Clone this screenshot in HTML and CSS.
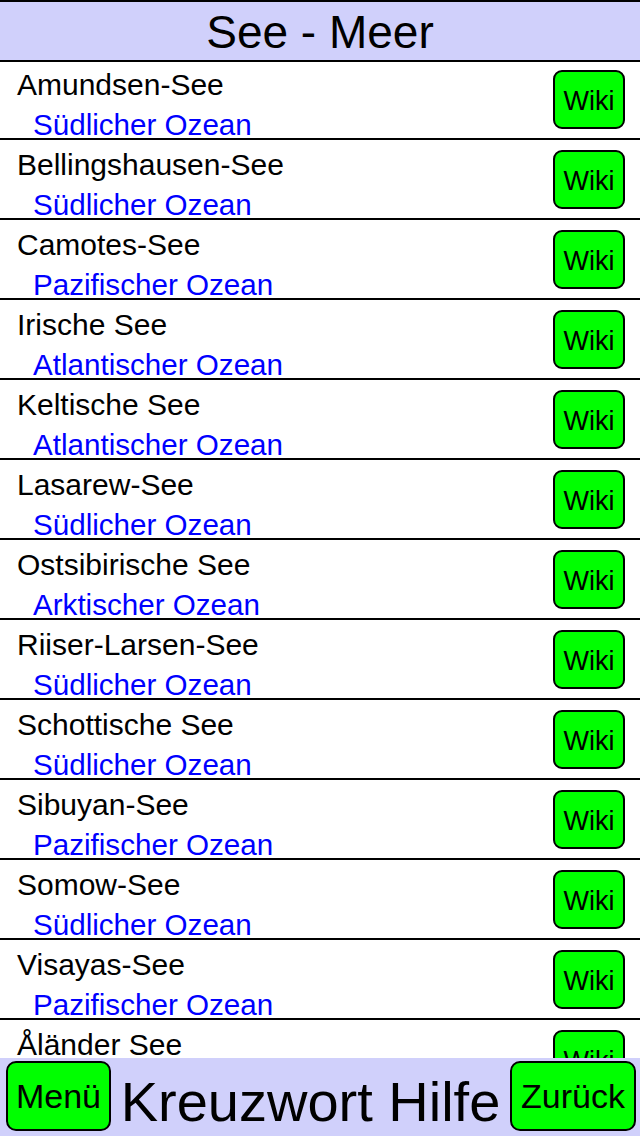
FILE: index.html
```html
<!DOCTYPE html>
<html lang="de">
<head>
<meta charset="utf-8">
<title>See - Meer</title>
<link rel="stylesheet" href="styles.css">
</head>
<body>
<div class="app">
  <header class="topbar">
    <h1 class="title">See - Meer</h1>
  </header>
  <main class="list">
    <div class="list-inner">
      <div class="row"><div class="text"><div class="name">Amundsen-See</div><div class="ocean">Südlicher Ozean</div></div><button class="wiki">Wiki</button></div>
      <div class="row"><div class="text"><div class="name">Bellingshausen-See</div><div class="ocean">Südlicher Ozean</div></div><button class="wiki">Wiki</button></div>
      <div class="row"><div class="text"><div class="name">Camotes-See</div><div class="ocean">Pazifischer Ozean</div></div><button class="wiki">Wiki</button></div>
      <div class="row"><div class="text"><div class="name">Irische See</div><div class="ocean">Atlantischer Ozean</div></div><button class="wiki">Wiki</button></div>
      <div class="row"><div class="text"><div class="name">Keltische See</div><div class="ocean">Atlantischer Ozean</div></div><button class="wiki">Wiki</button></div>
      <div class="row"><div class="text"><div class="name">Lasarew-See</div><div class="ocean">Südlicher Ozean</div></div><button class="wiki">Wiki</button></div>
      <div class="row"><div class="text"><div class="name">Ostsibirische See</div><div class="ocean">Arktischer Ozean</div></div><button class="wiki">Wiki</button></div>
      <div class="row"><div class="text"><div class="name">Riiser-Larsen-See</div><div class="ocean">Südlicher Ozean</div></div><button class="wiki">Wiki</button></div>
      <div class="row"><div class="text"><div class="name">Schottische See</div><div class="ocean">Südlicher Ozean</div></div><button class="wiki">Wiki</button></div>
      <div class="row"><div class="text"><div class="name">Sibuyan-See</div><div class="ocean">Pazifischer Ozean</div></div><button class="wiki">Wiki</button></div>
      <div class="row"><div class="text"><div class="name">Somow-See</div><div class="ocean">Südlicher Ozean</div></div><button class="wiki">Wiki</button></div>
      <div class="row"><div class="text"><div class="name">Visayas-See</div><div class="ocean">Pazifischer Ozean</div></div><button class="wiki">Wiki</button></div>
      <div class="row"><div class="text"><div class="name">Åländer See</div></div><button class="wiki">Wiki</button></div>
    </div>
  </main>
  <footer class="bottombar">
    <button class="navbtn menu">Menü</button>
    <div class="apptitle">Kreuzwort Hilfe</div>
    <button class="navbtn back">Zurück</button>
  </footer>
</div>
</body>
</html>
```
FILE: styles.css
```css
html, body {
  margin: 0;
  padding: 0;
  background: #ffffff;
}

body {
  font-family: "Liberation Sans", Arial, Helvetica, sans-serif;
  color: #000000;
}

.app {
  width: 640px;
  height: 1136px;
  display: flex;
  flex-direction: column;
  overflow: hidden;
}

.topbar {
  flex: 0 0 auto;
  height: 58px;
  background: #d0d0fb;
  border-top: 2px solid #000000;
  border-bottom: 2px solid #000000;
}

.title {
  margin: 0;
  padding-top: 1px;
  font-size: 46px;
  font-weight: normal;
  line-height: 58px;
  text-align: center;
}

.list {
  flex: 1 1 auto;
  overflow: hidden;
  background: #ffffff;
}

.list-inner {
  margin-top: -2px;
}

.row {
  display: flex;
  align-items: flex-start;
  height: 78px;
  padding: 0 15px 0 17px;
  border-bottom: 2px solid #000000;
}

.text {
  flex: 1 1 auto;
  padding-top: 5px;
}

.name {
  font-size: 30px;
  line-height: 39px;
  white-space: nowrap;
}

.ocean {
  font-size: 29.6px;
  line-height: 39px;
  padding-top: 1px;
  padding-left: 16px;
  color: #0000ff;
  white-space: nowrap;
}

.wiki {
  flex: 0 0 auto;
  margin-top: 10px;
  width: 72px;
  height: 59px;
  box-sizing: border-box;
  border: 2px solid #000000;
  border-radius: 9px;
  background: #00ff00;
  color: #000000;
  font-family: "Liberation Sans", Arial, Helvetica, sans-serif;
  font-size: 27px;
  padding: 3px 0 0 0;
  display: flex;
  align-items: center;
  justify-content: center;
}

.bottombar {
  flex: 0 0 78px;
  height: 78px;
  box-sizing: border-box;
  background: #d0d0fb;
  display: flex;
  align-items: flex-start;
  padding: 3px 4px 0 6px;
}

.navbtn {
  flex: 0 0 auto;
  height: 70px;
  box-sizing: border-box;
  border: 2px solid #000000;
  border-radius: 10px;
  background: #00ff00;
  color: #000000;
  font-family: "Liberation Sans", Arial, Helvetica, sans-serif;
  font-size: 34px;
  padding: 0;
  display: flex;
  align-items: center;
  justify-content: center;
}

.menu {
  width: 105px;
}

.back {
  width: 126px;
}

.apptitle {
  flex: 1 1 auto;
  text-align: center;
  font-size: 56px;
  line-height: 64px;
  padding-top: 9px;
  white-space: nowrap;
}
```
